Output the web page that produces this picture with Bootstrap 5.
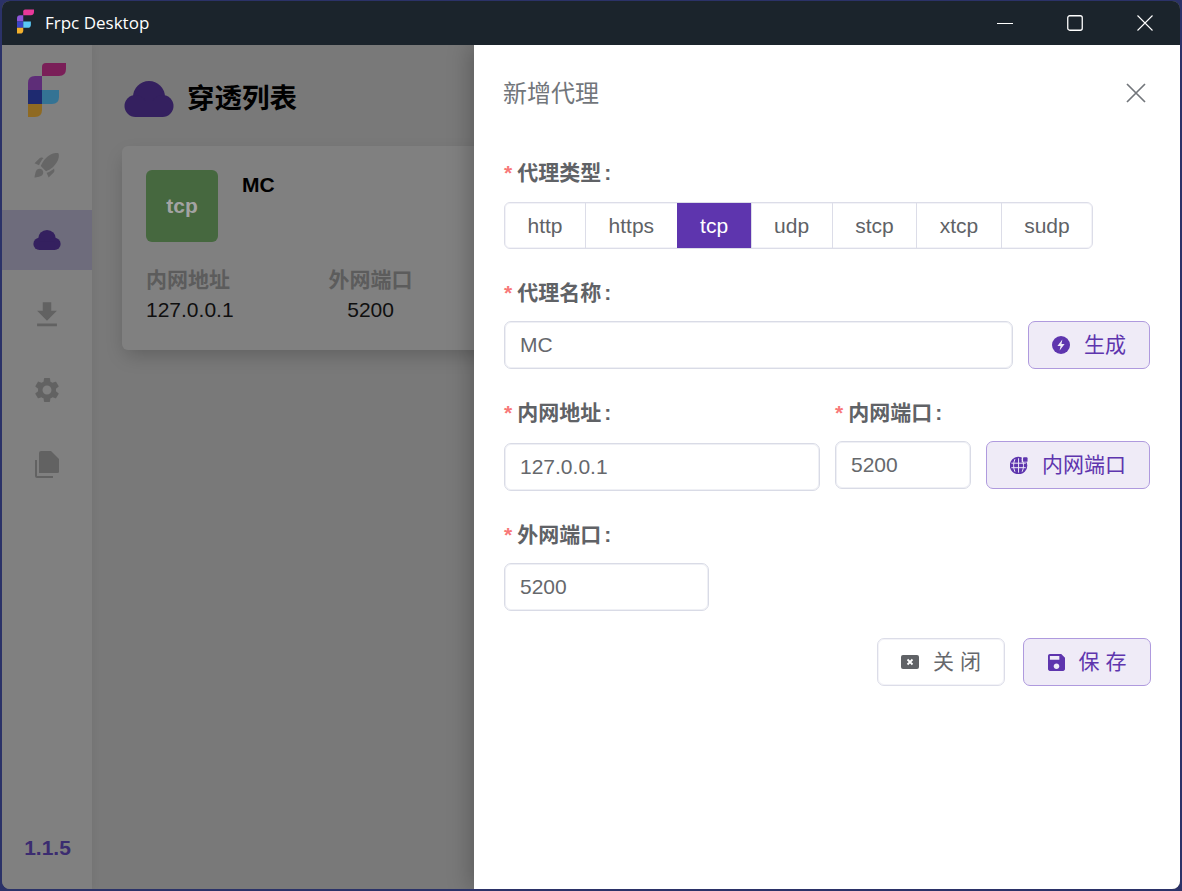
<!DOCTYPE html>
<html lang="zh-CN">
<head>
<meta charset="utf-8">
<title>Frpc Desktop</title>
<link href="https://cdn.jsdelivr.net/npm/bootstrap@5.3.0/dist/css/bootstrap.min.css" rel="stylesheet">
<style>
html,body{height:100%;overflow:hidden}
body{background:#2b3268;padding:1px 2px 0;font-family:"Liberation Sans","Noto Sans CJK SC",sans-serif;font-size:21px}
.win{height:888px;border-radius:8px;overflow:hidden;background:#797979}
.tbar{height:44px;background:#1b242c;color:#fff;flex:none}
.tbar-title{font-family:"Open Sans",sans-serif;font-size:17px;margin-left:11px}
.tbar-logo{margin-left:15px;margin-top:-3px}
.tbar-btns{margin-left:auto}
.tbar-btn{width:70px;height:44px}
.side{width:90px;background:#808080;flex:none;z-index:2;box-shadow:1px 0 8px rgba(0,0,0,.06)}
.side-logo{height:82px;padding:18px 0 0 26px}
.side-item{height:75px;color:#626262}
.side-item.on{background:#6e6c7c;height:60px;margin:7.5px 0}
.side-item.soft{color:#666}
.ver{margin-top:auto;padding:0 0 26px 1px;color:#3b2c70;font-weight:700;text-align:center}
.content{background:#797979;padding:36px 30px 0}
.head{font-size:27.5px;font-weight:700;color:#000;gap:13px;height:36px;line-height:38px;margin-left:2px}
.tcard{margin-top:29px;width:1028px;height:204px;background:#808080;border-radius:6px;box-shadow:0 8px 20px -4px rgba(0,0,0,.22);padding:24px;flex:none}
.tbox{width:72px;height:72px;background:#46683f;color:#a3a3a3;border-radius:6px;font-weight:700}
.tname{margin-left:24px;font-weight:700;color:#000;line-height:30px}
.tstats{margin-top:23px;gap:95px;line-height:30px}
.tcenter{text-align:center}
.tlabel{font-weight:700;color:#5c5c5c}
.tval{color:#0f0f0f}
.drawer{position:absolute;top:0;right:0;bottom:0;width:706px;background:#fff;z-index:5;padding:0 30px;box-shadow:-3px 0 22px rgba(0,0,0,.26)}
.dhead{height:116px;padding-top:33px;color:#72767b;font-size:24px;line-height:32px;margin-left:-1px}
.dclose{margin-top:5px}
.fgroup{margin-bottom:32px}
.flabel{display:block;height:24px;line-height:24px;margin-bottom:16px;font-weight:700;color:#606266;white-space:nowrap}
.flabel.gap-a{margin-bottom:17px}
.flabel.gap-b{margin-bottom:18px}
.req{color:#f87878;margin-right:5px}
.cln{margin-left:3px}
.seg{height:47px;border:1px solid #dcdde8;box-shadow:inset 0 0 0 1px #f3f3f8;border-radius:6px;width:max-content;overflow:hidden;color:#606266}
.seg-item{padding:0 22.5px;line-height:45px;border-left:1px solid #dcdde8}
.seg-item:first-child{border-left:0}
.seg-item.on{background:#5e35ae;color:#fff;border-left-color:#5e35ae}
.finput{display:block;height:48px;border:1px solid #d9dbe6;box-shadow:inset 0 0 0 1px #eff0f5;border-radius:7px;padding:0 15px;font-size:21px;color:#66686c;background:#fff;font-family:inherit;outline:0}
.w-name{width:509px}.w-addr{width:316px}.w-port{width:136px}.w-ext{width:205px}
.xbtn{height:48px;border-radius:7px;font-size:21px;gap:14px;padding:0}
.xbtn-p{background:#efebf7;border:1px solid #af9ade;color:#5e35ae}
.xbtn-d{background:#fff;border:1px solid #dcdde8;box-shadow:inset 0 0 0 1px #f3f3f8;color:#66686c}
.w-gen{width:122px}.w-lan{width:164px}.w-foot{width:128px}
.spaced{letter-spacing:6px;margin-right:-6px}
.gap15{gap:15px}
.gapfoot{gap:18px;margin-top:-5px;margin-right:-1px}
.lan-col{margin-left:15px}
</style>
</head>
<body>
<div class="win d-flex flex-column">
  <div class="tbar d-flex align-items-center">
    <svg class="tbar-logo" width="17" height="25" viewBox="0 0 38 54"><path d="M14 4q0-4 4-4h20v6q0 7-7 7H14z" fill="#e9389a"/><path d="M0 20q0-7 7-7h7v14H0z" fill="#8e56d8"/><path d="M0 27h14v14H0z" fill="#3a44c8"/><path d="M14 27h17v7q0 7-7 7H14z" fill="#5ac8f5"/><path d="M0 41h14v6q0 7-7 7H0z" fill="#f3b02c"/></svg>
    <span class="tbar-title">Frpc Desktop</span>
    <div class="tbar-btns d-flex">
      <div class="tbar-btn d-flex align-items-center justify-content-center"><svg width="16" height="16" viewBox="0 0 16 16"><path d="M0 8.500h16" stroke="#fff" stroke-width="1"/></svg></div>
      <div class="tbar-btn d-flex align-items-center justify-content-center"><svg width="16" height="16" viewBox="0 0 16 16"><rect x=".75" y=".75" width="14.500" height="14.500" rx="2" fill="none" stroke="#fff" stroke-width="1.300"/></svg></div>
      <div class="tbar-btn d-flex align-items-center justify-content-center"><svg width="16" height="16" viewBox="0 0 16 16"><path d="M.5.5l15 15M15.500.5l-15 15" stroke="#fff" stroke-width="1.100"/></svg></div>
    </div>
  </div>
  <div class="d-flex flex-grow-1 position-relative overflow-hidden">
    <div class="side d-flex flex-column">
      <div class="side-logo">
        <svg width="38" height="54" viewBox="0 0 38 54" class="d-block"><path d="M14 4q0-4 4-4h20v6q0 7-7 7H14z" fill="#7a1f58"/><path d="M0 20q0-7 7-7h7v14H0z" fill="#5e2d78"/><path d="M0 27h14v14H0z" fill="#1e2a70"/><path d="M14 27h17v7q0 7-7 7H14z" fill="#347394"/><path d="M0 41h14v6q0 7-7 7H0z" fill="#8f6a22"/></svg>
      </div>
      <div class="side-item soft d-flex align-items-center justify-content-center">
        <svg width="30" height="30" viewBox="0 0 24 24" fill="currentColor"><path d="M9.190 6.350c-2.040 2.290-3.440 5.580-3.570 5.890L2 10.690l4.050-4.050c.47-.47 1.150-.68 1.810-.55l1.330.26zM11.170 17s3.740-1.550 5.890-3.700c5.400-5.400 4.500-9.620 4.210-10.570-.95-.3-5.170-1.190-10.570 4.210C8.550 9.090 7 12.830 7 12.830L11.170 17zm6.480-2.190c-2.290 2.040-5.580 3.440-5.890 3.570L13.310 22l4.050-4.050c.47-.47.68-1.150.55-1.810l-.26-1.330zM9 18c0 .83-.34 1.580-.88 2.120C6.940 21.300 2 22 2 22s.7-4.940 1.880-6.120C4.420 15.340 5.170 15 6 15c1.660 0 3 1.340 3 3z"/></svg>
      </div>
      <div class="side-item on d-flex align-items-center justify-content-center">
        <svg width="28" height="20" viewBox="0 0 50 36" fill="#34205f"><circle cx="25" cy="16" r="16"/><circle cx="11.500" cy="25" r="11"/><circle cx="38.500" cy="25" r="11"/><rect x="11" y="20" width="28" height="16"/></svg>
      </div>
      <div class="side-item d-flex align-items-center justify-content-center">
        <svg width="34" height="34" viewBox="0 0 24 24" fill="currentColor"><path d="M19 9h-4V3H9v6H5l7 7 7-7zM5 18v2h14v-2H5z"/></svg>
      </div>
      <div class="side-item d-flex align-items-center justify-content-center">
        <svg width="30" height="30" viewBox="0 0 24 24" fill="currentColor"><path d="M19.140 12.940c.04-.3.06-.61.06-.94 0-.32-.02-.64-.07-.94l2.030-1.580c.18-.14.23-.41.12-.61l-1.920-3.320c-.12-.22-.37-.29-.59-.22l-2.390.96c-.5-.38-1.030-.7-1.620-.94l-.36-2.540c-.04-.24-.24-.41-.48-.41h-3.840c-.24 0-.43.17-.47.41l-.36 2.540c-.59.24-1.130.57-1.620.94l-2.390-.96c-.22-.08-.47 0-.59.22L2.740 8.870c-.12.21-.08.47.12.61l2.030 1.580c-.05.3-.09.63-.09.94s.02.64.07.94l-2.030 1.580c-.18.14-.23.41-.12.61l1.920 3.320c.12.22.37.29.59.22l2.390-.96c.5.38 1.030.7 1.620.94l.36 2.540c.05.24.24.41.48.41h3.840c.24 0 .44-.17.47-.41l.36-2.540c.59-.24 1.130-.56 1.620-.94l2.390.96c.22.08.47 0 .59-.22l1.920-3.320c.12-.22.07-.47-.12-.61l-2.010-1.580zM12 15.600c-1.980 0-3.600-1.620-3.600-3.600s1.620-3.600 3.600-3.600 3.600 1.620 3.600 3.600-1.620 3.600-3.600 3.600z"/></svg>
      </div>
      <div class="side-item d-flex align-items-center justify-content-center">
        <svg width="24" height="27" viewBox="0 0 24 27" fill="currentColor"><path d="M6 0h10l8 8v12.500a1.500 1.500 0 0 1-1.500 1.500H4V2a2 2 0 0 1 2-2z"/><path d="M0 9h2v16h16v2H2a2 2 0 0 1-2-2z"/></svg>
      </div>
      <div class="ver">1.1.5</div>
    </div>
    <div class="content flex-grow-1 d-flex flex-column">
      <div class="head d-flex align-items-center">
        <svg width="50" height="36" viewBox="0 0 50 36" fill="#34205f"><circle cx="25" cy="16" r="16"/><circle cx="11.500" cy="25" r="11"/><circle cx="38.500" cy="25" r="11"/><rect x="11" y="20" width="28" height="16"/></svg>
        <span>穿透列表</span>
      </div>
      <div class="tcard">
        <div class="d-flex">
          <div class="tbox d-flex align-items-center justify-content-center">tcp</div>
          <div class="tname">MC</div>
        </div>
        <div class="tstats d-flex">
          <div><div class="tlabel">内网地址</div><div class="tval">127.0.0.1</div></div>
          <div class="tcenter"><div class="tlabel">外网端口</div><div class="tval">5200</div></div>
        </div>
      </div>
    </div>
    <div class="drawer">
      <div class="dhead d-flex justify-content-between">
        <span>新增代理</span>
        <svg class="dclose me-1" width="20" height="20" viewBox="0 0 20 20"><path d="M1 1l18 18M19 1L1 19" stroke="#72767b" stroke-width="1.700"/></svg>
      </div>
      <div class="fgroup">
        <span class="flabel gap-a"><span class="req">*</span>代理类型<span class="cln">:</span></span>
        <div class="seg d-flex">
          <div class="seg-item">http</div><div class="seg-item">https</div><div class="seg-item on">tcp</div><div class="seg-item">udp</div><div class="seg-item">stcp</div><div class="seg-item">xtcp</div><div class="seg-item">sudp</div>
        </div>
      </div>
      <div class="fgroup">
        <span class="flabel"><span class="req">*</span>代理名称<span class="cln">:</span></span>
        <div class="d-flex gap15">
          <input class="finput w-name" value="MC">
          <button type="button" class="xbtn xbtn-p w-gen d-flex align-items-center justify-content-center">
            <svg width="18" height="18" viewBox="0 0 20 20"><circle cx="10" cy="10" r="10" fill="#5e35ae"/><path d="M11.500 3.800L6 11h3.500l-1 5.200L14 9h-3.500z" fill="#efebf7"/></svg>生成
          </button>
        </div>
      </div>
      <div class="fgroup d-flex">
        <div>
          <span class="flabel gap-b"><span class="req">*</span>内网地址<span class="cln">:</span></span>
          <input class="finput w-addr" value="127.0.0.1">
        </div>
        <div class="lan-col">
          <span class="flabel"><span class="req">*</span>内网端口<span class="cln">:</span></span>
          <div class="d-flex gap15">
            <input class="finput w-port" value="5200">
            <button type="button" class="xbtn xbtn-p w-lan d-flex align-items-center justify-content-center">
              <svg width="18" height="18" viewBox="0 0 20 20" fill="none" stroke="#5e35ae" stroke-width="1.500"><circle cx="9.500" cy="10.500" r="9" fill="#5e35ae"/><path d="M1.500 8h16M1.500 13h16M9.500 2.500v16M5.500 3.500c-2 4-2 10 0 14M13.500 3.500c2 4 2 10 0 14" stroke="#efebf7" stroke-width="1.100"/><rect x="13" y="0" width="7" height="7" fill="#efebf7" stroke="none"/><rect x="14.500" y="1.500" width="5" height="5" rx="1" fill="#5e35ae" stroke="none"/></svg>内网端口
            </button>
          </div>
        </div>
      </div>
      <div class="fgroup">
        <span class="flabel"><span class="req">*</span>外网端口<span class="cln">:</span></span>
        <input class="finput w-ext" value="5200">
      </div>
      <div class="d-flex justify-content-end gapfoot">
        <button type="button" class="xbtn xbtn-d w-foot d-flex align-items-center justify-content-center">
          <svg width="18" height="14" viewBox="0 0 18 14"><rect width="18" height="14" rx="2" fill="#606266"/><path d="M6.500 4.500l5 5M11.500 4.500l-5 5" stroke="#fff" stroke-width="1.800"/></svg><span class="spaced">关闭</span>
        </button>
        <button type="button" class="xbtn xbtn-p w-foot d-flex align-items-center justify-content-center">
          <svg width="17" height="17" viewBox="3 3 18 18" fill="#5e35ae"><path d="M17 3H5c-1.110 0-2 .9-2 2v14c0 1.100.89 2 2 2h14c1.100 0 2-.9 2-2V7l-4-4zm-5 16c-1.660 0-3-1.340-3-3s1.340-3 3-3 3 1.340 3 3-1.340 3-3 3zm3-10H5V5h10v4z"/></svg><span class="spaced">保存</span>
        </button>
      </div>
    </div>
  </div>
</div>
<script src="https://cdn.jsdelivr.net/npm/bootstrap@5.3.0/dist/js/bootstrap.bundle.min.js"></script>
</body>
</html>
